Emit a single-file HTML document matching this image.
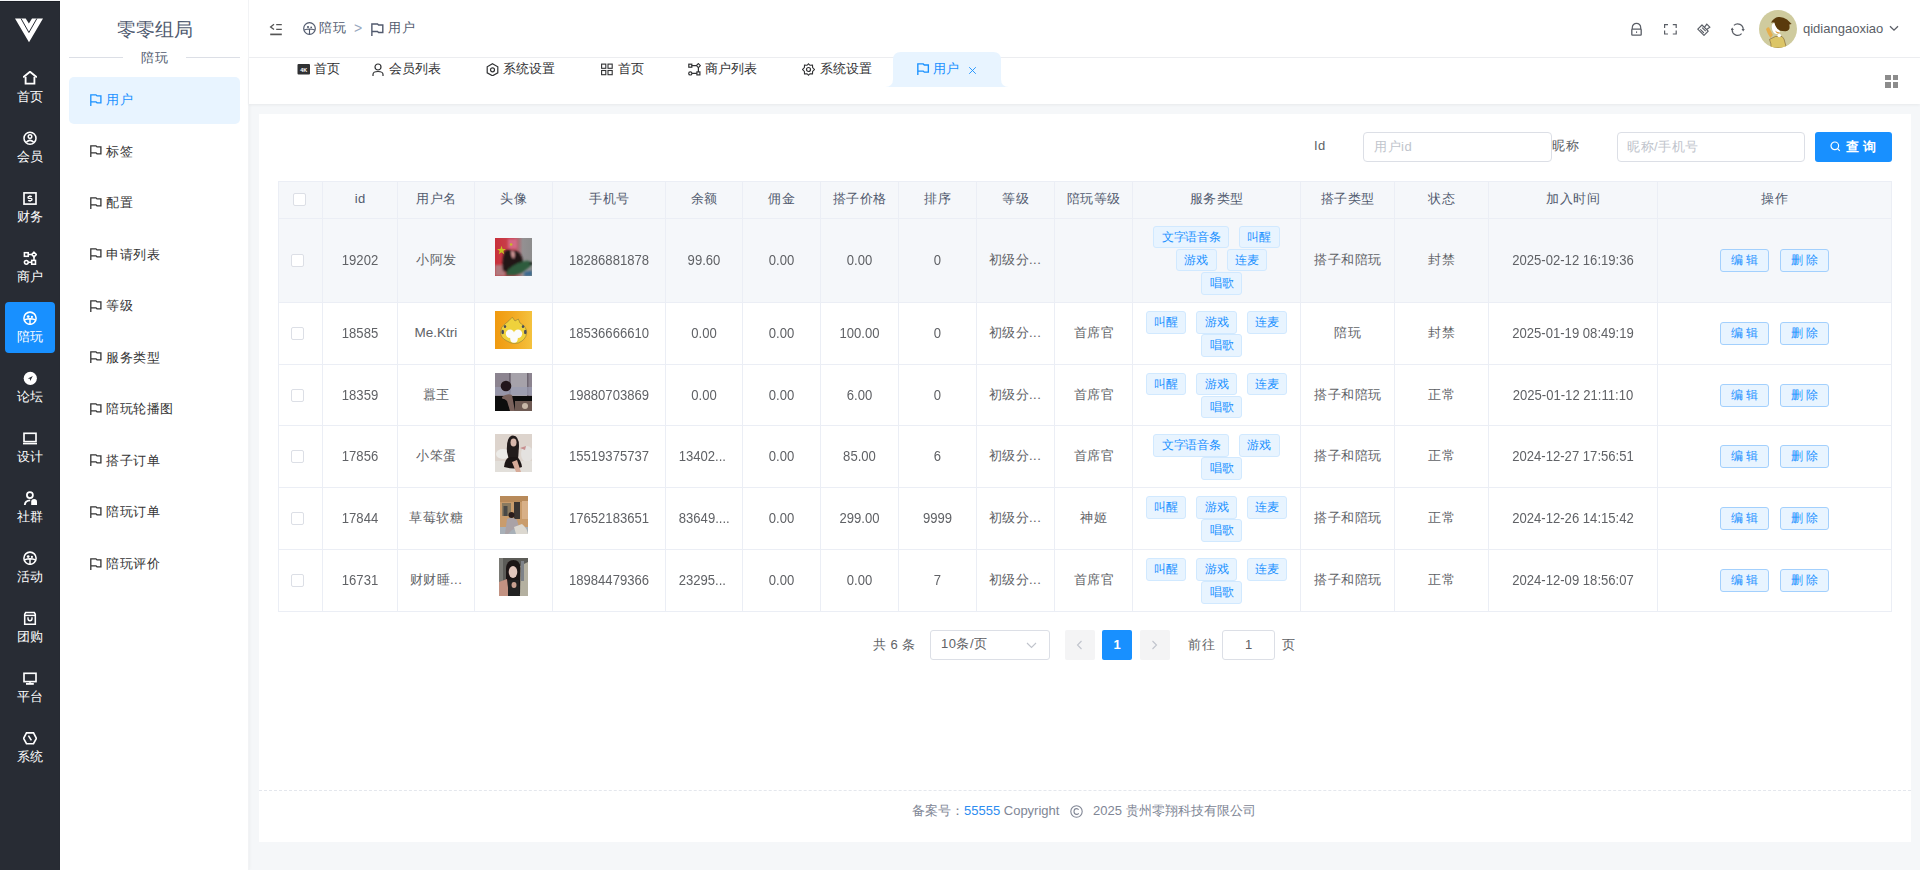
<!DOCTYPE html>
<html><head><meta charset="utf-8"><title>用户</title>
<style>
*{box-sizing:border-box;margin:0;padding:0}
html,body{width:1920px;height:870px;overflow:hidden}
body{position:relative;background:#f5f7f9;font-family:"Liberation Sans", sans-serif;color:#606266;font-size:13px}
.a{position:absolute}
.nw{white-space:nowrap}
#dark{left:0;top:1px;width:60px;height:869px;background:#282c34;border-top:1px solid #1d2027}
.di{position:absolute;left:23px;width:14px;height:14px}
.dt{position:absolute;left:0;width:60px;text-align:center;color:#fff;font-size:13px;letter-spacing:.5px;line-height:16px}
#act{left:5px;top:302px;width:50px;height:51px;background:#1890ff;border-radius:4px}
#sub{left:60px;top:0;width:189px;height:870px;background:#fff;border-right:1px solid #f2f3f5;box-shadow:1px 0 3px rgba(0,0,0,.03)}
.mi{position:absolute;left:9px;width:171px;height:47px;border-radius:4px}
.mt{position:absolute;left:46px;color:#303133;font-size:13px;letter-spacing:.5px;line-height:16px}
.fl{position:absolute;left:30px;width:12px;height:12px}
#hdr{left:249px;top:0;width:1671px;height:58px;background:#fff;border-bottom:1px solid #eeeff2}
#tabs{left:249px;top:58px;width:1671px;height:46px;background:#fff;box-shadow:0 1px 3px rgba(0,0,0,.06)}
.tt{position:absolute;top:61px;color:#303133;font-size:13px;line-height:16px}
#card{left:259px;top:114px;width:1652px;height:728px;background:#fff}

.vl{position:absolute;top:181px;width:1px;height:431px;background:#ebeef5}
.hl{position:absolute;left:278px;width:1614px;height:1px;background:#ebeef5}
.c{position:absolute;text-align:center;white-space:nowrap;color:#606266;font-size:13px;letter-spacing:.5px;text-indent:.5px}
.num{font-size:14px;letter-spacing:0;text-indent:0;transform:scaleX(.935)}
.tag{display:inline-block;height:22.5px;line-height:20.5px;text-align:center;padding:0;width:40.6px;font-size:12px;color:#1890ff;background:#e8f4ff;border:1px solid #d1e9ff;border-radius:3px;white-space:nowrap}
.tags{position:absolute;display:flex;flex-wrap:wrap;justify-content:center;row-gap:.75px}
.tag.w5{width:75.6px;letter-spacing:-.3px}
.tags .tag+.tag{margin-left:10px}
.btn{position:absolute;width:48.5px;height:23px;line-height:21px;text-align:center;font-size:12px;color:#1890ff;background:#e8f4ff;border:1px solid #a3d0fd;border-radius:3px}
</style></head><body>

<div id="dark" class="a"></div>
<svg class="a" style="left:0;top:0" width="60" height="60" viewBox="0 0 60 60"><polygon fill="#fff" points="15,18.5 25.7,18.5 28.9,23.5 32,18.5 43,18.5 29,42.3"/><polyline fill="none" stroke="#282c34" stroke-width="1" points="21,18.5 28.9,32.5 36.9,18.5"/></svg>
<div id="act" class="a"></div>
<svg class="di" style="top:71px" viewBox="0 0 14 14"><path d="M0.2 6.4 L7 0.7 L13.8 6.4" fill="none" stroke="#fff" stroke-width="1.85"/><path d="M2.6 5.8 V12.6 H11.4 V5.8" fill="none" stroke="#fff" stroke-width="1.85"/></svg>
<div class="dt" style="top:89px">首页</div>
<svg class="di" style="top:131px" viewBox="0 0 14 14"><circle cx="7" cy="7.2" r="6" fill="none" stroke="#fff" stroke-width="1.55"/><circle cx="7" cy="5.6" r="1.8" fill="none" stroke="#fff" stroke-width="1.45"/><path d="M3.3 11.3 Q7 7.4 10.7 11.3" fill="none" stroke="#fff" stroke-width="1.55"/></svg>
<div class="dt" style="top:149px">会员</div>
<svg class="di" style="top:191px" viewBox="0 0 14 14"><rect x="1" y="1.9" width="12" height="11.2" fill="none" stroke="#fff" stroke-width="1.65"/><path d="M8.9 5.4 H6.1 Q5 5.4 5 6.4 Q5 7.4 6.1 7.4 H7.9 Q9 7.4 9 8.5 Q9 9.6 7.9 9.6 H5.1 M7 4.2 V5.4 M7 9.6 V10.8" fill="none" stroke="#fff" stroke-width="1.35"/></svg>
<div class="dt" style="top:209px">财务</div>
<svg class="di" style="top:251px" viewBox="0 0 14 14"><rect x="1.4" y="1.7" width="3.8" height="3.6" fill="none" stroke="#fff" stroke-width="1.55"/><path d="M11 1.2 L13.3 3.5 L11 5.8 L8.7 3.5 Z" fill="none" stroke="#fff" stroke-width="1.55"/><circle cx="3.3" cy="11.3" r="1.9" fill="none" stroke="#fff" stroke-width="1.55"/><rect x="8.7" y="9.4" width="3.8" height="3.8" fill="none" stroke="#fff" stroke-width="1.55"/><path d="M5.2 3.5 H8.7 M11 5.8 V9.4 M5.2 11.3 H8.7" stroke="#fff" stroke-width="1.55"/></svg>
<div class="dt" style="top:269px">商户</div>
<svg class="di" style="top:311px" viewBox="0 0 14 14"><circle cx="7" cy="7.2" r="6.1" fill="none" stroke="#fff" stroke-width="1.55"/><circle cx="5.2" cy="5.6" r="1.4" fill="#fff"/><circle cx="8.9" cy="5.9" r="1.1" fill="#fff"/><path d="M1.4 8.9 Q7 6.7 12.6 8.9 M7 8.4 V13" fill="none" stroke="#fff" stroke-width="1.45"/></svg>
<div class="dt" style="top:329px">陪玩</div>
<svg class="di" style="top:371px" viewBox="0 0 14 14"><circle cx="7.3" cy="7.3" r="6.6" fill="#fff"/><path d="M9.8 5 L4.8 7.5 L6.8 7.8 L7.2 9.9 Z" fill="#282c34"/></svg>
<div class="dt" style="top:389px">论坛</div>
<svg class="di" style="top:431px" viewBox="0 0 14 14"><rect x="1" y="2.3" width="12" height="8.3" fill="none" stroke="#fff" stroke-width="1.65"/><rect x="0" y="11.9" width="14" height="1.5" fill="#fff"/></svg>
<div class="dt" style="top:449px">设计</div>
<svg class="di" style="top:491px" viewBox="0 0 14 14"><circle cx="6.9" cy="4.1" r="3" fill="none" stroke="#fff" stroke-width="1.75"/><path d="M1.8 14 Q2 9.6 7.2 9.4" fill="none" stroke="#fff" stroke-width="1.85"/><path d="M8.2 14 V10.6 Q8.2 8.1 11.1 8.1 Q14 8.1 14 10.6 V14 Z" fill="#fff"/></svg>
<div class="dt" style="top:509px">社群</div>
<svg class="di" style="top:551px" viewBox="0 0 14 14"><circle cx="7" cy="7.2" r="6.1" fill="none" stroke="#fff" stroke-width="1.55"/><circle cx="5.2" cy="5.6" r="1.4" fill="#fff"/><circle cx="8.9" cy="5.9" r="1.1" fill="#fff"/><path d="M1.4 8.9 Q7 6.7 12.6 8.9 M7 8.4 V13" fill="none" stroke="#fff" stroke-width="1.45"/></svg>
<div class="dt" style="top:569px">活动</div>
<svg class="di" style="top:611px" viewBox="0 0 14 14"><path d="M2.7 1.5 H11.3 L12.3 3.3 V13.3 H1.7 V3.3 Z" fill="none" stroke="#fff" stroke-width="1.55"/><path d="M2 4.4 H12" stroke="#fff" stroke-width="1.45"/><path d="M5 6.3 V7.6 Q5 9.8 7 9.8 Q9 9.8 9 7.6 V6.3" fill="none" stroke="#fff" stroke-width="1.45"/></svg>
<div class="dt" style="top:629px">团购</div>
<svg class="di" style="top:671px" viewBox="0 0 14 14"><rect x="1" y="2.3" width="12" height="8.3" fill="none" stroke="#fff" stroke-width="1.65"/><rect x="3" y="12" width="7.8" height="1.8" fill="#fff"/><rect x="6.3" y="10.6" width="1.4" height="1.6" fill="#fff"/></svg>
<div class="dt" style="top:689px">平台</div>
<svg class="di" style="top:731px" viewBox="0 0 14 14"><path d="M0.6 7.3 L3.5 1.8 H10.5 L13.4 7.3 L10.5 12.7 H3.5 Z" fill="none" stroke="#fff" stroke-width="1.65"/><path d="M5.4 4.6 L8.4 9.4" stroke="#fff" stroke-width="1.55"/></svg>
<div class="dt" style="top:749px">系统</div>
<div id="sub" class="a"></div>
<div class="a nw" style="left:60px;top:18px;width:189px;text-align:center;font-size:19px;line-height:24px;color:#4f5a70">零零组局</div>
<div class="a" style="left:69px;top:57px;width:54px;height:1px;background:#dcdfe6"></div>
<div class="a" style="left:186px;top:57px;width:54px;height:1px;background:#dcdfe6"></div>
<div class="a nw" style="left:60px;top:50px;width:189px;text-align:center;font-size:13px;letter-spacing:.5px;line-height:16px;color:#515a6e">陪玩</div>
<div class="a" style="left:69px;top:77px;width:171px;height:47px;border-radius:5px;background:#e8f4ff"></div>
<svg class="a" style="left:90px;top:93.60px" width="12" height="12" viewBox="0 0 12 12"><path d="M0.8 12 V0.9 H6 L7 1.9 H10.9 V8.8 H7 L6 7.8 H0.8" fill="none" stroke="#1890ff" stroke-width="1.3"/></svg>
<div class="a nw" style="left:106px;top:92.00px;font-size:13px;letter-spacing:.5px;line-height:16px;color:#1890ff">用户</div>
<svg class="a" style="left:90px;top:145.15px" width="12" height="12" viewBox="0 0 12 12"><path d="M0.8 12 V0.9 H6 L7 1.9 H10.9 V8.8 H7 L6 7.8 H0.8" fill="none" stroke="#333" stroke-width="1.3"/></svg>
<div class="a nw" style="left:106px;top:143.55px;font-size:13px;letter-spacing:.5px;line-height:16px;color:#333">标签</div>
<svg class="a" style="left:90px;top:196.70px" width="12" height="12" viewBox="0 0 12 12"><path d="M0.8 12 V0.9 H6 L7 1.9 H10.9 V8.8 H7 L6 7.8 H0.8" fill="none" stroke="#333" stroke-width="1.3"/></svg>
<div class="a nw" style="left:106px;top:195.10px;font-size:13px;letter-spacing:.5px;line-height:16px;color:#333">配置</div>
<svg class="a" style="left:90px;top:248.25px" width="12" height="12" viewBox="0 0 12 12"><path d="M0.8 12 V0.9 H6 L7 1.9 H10.9 V8.8 H7 L6 7.8 H0.8" fill="none" stroke="#333" stroke-width="1.3"/></svg>
<div class="a nw" style="left:106px;top:246.65px;font-size:13px;letter-spacing:.5px;line-height:16px;color:#333">申请列表</div>
<svg class="a" style="left:90px;top:299.80px" width="12" height="12" viewBox="0 0 12 12"><path d="M0.8 12 V0.9 H6 L7 1.9 H10.9 V8.8 H7 L6 7.8 H0.8" fill="none" stroke="#333" stroke-width="1.3"/></svg>
<div class="a nw" style="left:106px;top:298.20px;font-size:13px;letter-spacing:.5px;line-height:16px;color:#333">等级</div>
<svg class="a" style="left:90px;top:351.35px" width="12" height="12" viewBox="0 0 12 12"><path d="M0.8 12 V0.9 H6 L7 1.9 H10.9 V8.8 H7 L6 7.8 H0.8" fill="none" stroke="#333" stroke-width="1.3"/></svg>
<div class="a nw" style="left:106px;top:349.75px;font-size:13px;letter-spacing:.5px;line-height:16px;color:#333">服务类型</div>
<svg class="a" style="left:90px;top:402.90px" width="12" height="12" viewBox="0 0 12 12"><path d="M0.8 12 V0.9 H6 L7 1.9 H10.9 V8.8 H7 L6 7.8 H0.8" fill="none" stroke="#333" stroke-width="1.3"/></svg>
<div class="a nw" style="left:106px;top:401.30px;font-size:13px;letter-spacing:.5px;line-height:16px;color:#333">陪玩轮播图</div>
<svg class="a" style="left:90px;top:454.45px" width="12" height="12" viewBox="0 0 12 12"><path d="M0.8 12 V0.9 H6 L7 1.9 H10.9 V8.8 H7 L6 7.8 H0.8" fill="none" stroke="#333" stroke-width="1.3"/></svg>
<div class="a nw" style="left:106px;top:452.85px;font-size:13px;letter-spacing:.5px;line-height:16px;color:#333">搭子订单</div>
<svg class="a" style="left:90px;top:506.00px" width="12" height="12" viewBox="0 0 12 12"><path d="M0.8 12 V0.9 H6 L7 1.9 H10.9 V8.8 H7 L6 7.8 H0.8" fill="none" stroke="#333" stroke-width="1.3"/></svg>
<div class="a nw" style="left:106px;top:504.40px;font-size:13px;letter-spacing:.5px;line-height:16px;color:#333">陪玩订单</div>
<svg class="a" style="left:90px;top:557.55px" width="12" height="12" viewBox="0 0 12 12"><path d="M0.8 12 V0.9 H6 L7 1.9 H10.9 V8.8 H7 L6 7.8 H0.8" fill="none" stroke="#333" stroke-width="1.3"/></svg>
<div class="a nw" style="left:106px;top:555.95px;font-size:13px;letter-spacing:.5px;line-height:16px;color:#333">陪玩评价</div>
<div id="hdr" class="a"></div>
<svg class="a" style="left:269px;top:23px" width="14" height="13" viewBox="0 0 14 13"><path d="M5 1.2 L1.6 3.9 L5 6.6" fill="none" stroke="#555" stroke-width="1.3"/><path d="M7.2 1.6 H12.8 M7.2 6.4 H12.8" stroke="#555" stroke-width="1.3"/><path d="M1.2 11.4 H12.8" stroke="#555" stroke-width="1.7"/></svg>
<svg class="a" style="left:303px;top:22px" width="13" height="13" viewBox="0 0 13 13"><circle cx="6.5" cy="6.5" r="5.8" fill="none" stroke="#515a6e" stroke-width="1.2"/><circle cx="5" cy="5" r="1.1" fill="#515a6e"/><circle cx="8.2" cy="5.3" r="0.9" fill="#515a6e"/><path d="M1.2 8 Q6.5 6 11.8 8 M6.5 7.6 V12" fill="none" stroke="#515a6e" stroke-width="1.1"/></svg>
<div class="a nw" style="left:319px;top:20px;font-size:13px;letter-spacing:.5px;line-height:16px;color:#515a6e">陪玩</div>
<div class="a nw" style="left:354px;top:19.5px;font-size:14px;line-height:17px;color:#97a8be">&gt;</div>
<svg class="a" style="left:371px;top:22.5px" width="13" height="13" viewBox="0 0 12 12"><path d="M0.8 12 V0.9 H6 L7 1.9 H10.9 V8.8 H7 L6 7.8 H0.8" fill="none" stroke="#515a6e" stroke-width="1.3"/></svg>
<div class="a nw" style="left:388px;top:20px;font-size:13px;letter-spacing:.5px;line-height:16px;color:#515a6e">用户</div>
<svg class="a" style="left:1630px;top:22px" width="13" height="14" viewBox="0 0 13 14"><path d="M2.3 7 V5.5 A4.2 4.2 0 0 1 10.7 5.5 V7" fill="none" stroke="#5a5e66" stroke-width="1.2"/><rect x="1.8" y="7.2" width="9.4" height="6" rx=".6" fill="none" stroke="#5a5e66" stroke-width="1.3"/><rect x="6" y="9.4" width="1.1" height="1.5" fill="#5a5e66"/></svg>
<svg class="a" style="left:1663px;top:23px" width="15" height="13" viewBox="0 0 15 13"><path d="M1.6 5 V1.6 H5 M9.8 1.6 H13.2 V5 M13.2 7.6 V11 H9.8 M5 11 H1.6 V7.6" fill="none" stroke="#5a5e66" stroke-width="1.2"/></svg>
<svg class="a" style="left:1697px;top:23px" width="14" height="14" viewBox="0 0 14 14"><path d="M0.8 6.2 L5 2 L11.2 8.2 L7 12.4 Z" fill="none" stroke="#5a5e66" stroke-width="1.2" stroke-linejoin="round"/><path d="M7.4 4.4 L9.8 1.2 L12.8 4.2 L9.6 6.6" fill="none" stroke="#5a5e66" stroke-width="1.2"/><path d="M3.3 6.4 L6.9 10 M5.1 4.6 L8.7 8.2" stroke="#5a5e66" stroke-width="1.1"/></svg>
<svg class="a" style="left:1731px;top:23px" width="14" height="14" viewBox="0 0 14 14"><path d="M2.9 2.4 A5.5 5.5 0 0 1 12.2 6.6 M10.6 10.7 A5.5 5.5 0 0 1 1.2 6.4" fill="none" stroke="#5a5e66" stroke-width="1.2"/><path d="M10.5 6 H13.8 L12.15 8.6 Z M-0.4 7 H2.9 L1.25 4.4 Z" fill="#5a5e66"/></svg>
<svg class="a" style="left:1759px;top:10px" width="38" height="38" viewBox="0 0 38 38"><defs><clipPath id="av"><circle cx="19" cy="19" r="19"/></clipPath></defs><g clip-path="url(#av)"><rect width="38" height="38" fill="#cfcb9e"/><path d="M10.5 29.4 L16.3 26.5 H23 L25 29 L27.5 38 H12 Q12.5 34 10.5 29.4 Z" fill="#dcc566" stroke="#6a4a20" stroke-width=".5"/><path d="M7 19.3 Q8 17 10 17.3 L13.9 25 L11.5 28 Q8.5 24 7 19.3 Z" fill="#e6ae4c"/><path d="M13 14.5 Q12 19.5 14.9 23.1 Q17.5 24.5 19.5 23.6 L21.5 21 Q17.5 18.5 15.5 12.5 Z" fill="#fff"/><path d="M16.3 20.4 Q18 22.6 20.5 22 L19.6 23.4 Q17 23.6 16.3 20.4 Z" fill="#e09a40"/><path d="M12 12.5 Q15 7.5 19.2 7 Q24 6.4 28 9.5 L32.7 14 L30.3 14.4 Q31 18 30 19.5 Q28.5 21.5 26 21.2 L21.2 20.7 Q18 19 17.3 17.3 Q15.8 15 15.4 12.5 Z" fill="#5a3a0c"/><circle cx="20.2" cy="25.5" r="1.8" fill="#fff"/></g></svg>
<div class="a nw" style="left:1803px;top:20px;font-size:13px;line-height:17px;color:#5a5e66">qidiangaoxiao</div>
<svg class="a" style="left:1889px;top:25px" width="10" height="7" viewBox="0 0 10 7"><path d="M1 1.2 L5 5.2 L9 1.2" fill="none" stroke="#5a5e66" stroke-width="1.3"/></svg>
<div id="tabs" class="a"></div>
<svg class="a" style="left:885px;top:52px" width="124" height="36" viewBox="0 0 124 36"><path d="M0 35 Q8 35 8 27 V8 Q8 0 16 0 H108 Q116 0 116 8 V27 Q116 35 124 35 Z" fill="#e8f4ff"/></svg>
<svg class="a" style="left:297px;top:63px" width="13" height="13" viewBox="0 0 13 13"><rect x="0.5" y="1" width="12.5" height="10.5" rx="1" fill="#303133"/><text x="6.7" y="8.6" font-size="5.5" font-family="Liberation Sans" font-weight="bold" text-anchor="middle" fill="#fff">4K</text></svg>
<div class="tt nw" style="left:314px">首页</div>
<svg class="a" style="left:372px;top:63px" width="13" height="13" viewBox="0 0 13 13"><circle cx="6" cy="4" r="3" fill="none" stroke="#303133" stroke-width="1.2"/><path d="M1 13 V11.5 Q1 8.5 6 8.5 Q11 8.5 11 11.5 V13" fill="none" stroke="#303133" stroke-width="1.2"/></svg>
<div class="tt nw" style="left:389px">会员列表</div>
<svg class="a" style="left:486px;top:63px" width="13" height="13" viewBox="0 0 13 13"><path d="M6.5 0.8 L11.8 3.8 V9.8 L6.5 12.8 L1.2 9.8 V3.8 Z" fill="none" stroke="#303133" stroke-width="1.2"/><circle cx="6.5" cy="6.8" r="2" fill="none" stroke="#303133" stroke-width="1.2"/></svg>
<div class="tt nw" style="left:503px">系统设置</div>
<svg class="a" style="left:601px;top:63px" width="13" height="13" viewBox="0 0 13 13"><rect x="0.6" y="1.1" width="4.2" height="4.2" fill="none" stroke="#303133" stroke-width="1.1"/><rect x="7" y="1.1" width="4.2" height="4.2" fill="none" stroke="#303133" stroke-width="1.1"/><rect x="0.6" y="7.5" width="4.2" height="4.2" fill="none" stroke="#303133" stroke-width="1.1"/><rect x="7" y="7.5" width="4.2" height="4.2" fill="none" stroke="#303133" stroke-width="1.1"/></svg>
<div class="tt nw" style="left:617.5px">首页</div>
<svg class="a" style="left:688px;top:63px" width="13" height="13" viewBox="0 0 13 13"><rect x="0.8" y="1.2" width="3" height="3" fill="none" stroke="#303133" stroke-width="1.2"/><path d="M10.4 0.5 L12.3 2.6 L10.4 4.6 L8.4 2.6 Z" fill="none" stroke="#303133" stroke-width="1.1"/><circle cx="2.3" cy="10.4" r="1.6" fill="none" stroke="#303133" stroke-width="1.2"/><rect x="8.9" y="8.9" width="3" height="3" fill="none" stroke="#303133" stroke-width="1.2"/><path d="M3.8 2.6 H8.4 M10.4 4.6 V8.9 M3.9 10.4 H8.9" stroke="#303133" stroke-width="1.2"/></svg>
<div class="tt nw" style="left:705px">商户列表</div>
<svg class="a" style="left:802px;top:63px" width="13" height="13" viewBox="0 0 13 13"><path d="M6.5 0.8 L8 2.3 L10.5 2.1 L10.6 4.5 L12.4 6.5 L10.6 8.5 L10.5 10.9 L8 10.7 L6.5 12.2 L5 10.7 L2.5 10.9 L2.4 8.5 L0.6 6.5 L2.4 4.5 L2.5 2.1 L5 2.3 Z" fill="none" stroke="#303133" stroke-width="1.1"/><circle cx="6.5" cy="6.5" r="2" fill="none" stroke="#303133" stroke-width="1.2"/></svg>
<div class="tt nw" style="left:820px">系统设置</div>
<svg class="a" style="left:917px;top:62.5px" width="12.5" height="12.5" viewBox="0 0 12 12"><path d="M0.8 12 V0.9 H6 L7 1.9 H10.9 V8.8 H7 L6 7.8 H0.8" fill="none" stroke="#1890ff" stroke-width="1.3"/></svg>
<div class="tt nw" style="left:933px;color:#1890ff">用户</div>
<svg class="a" style="left:968px;top:65.5px" width="9" height="9" viewBox="0 0 9 9"><path d="M1.2 1.2 L7.8 7.8 M7.8 1.2 L1.2 7.8" stroke="#1890ff" stroke-width=".9"/></svg>
<svg class="a" style="left:1885px;top:75px" width="13" height="13" viewBox="0 0 13 13"><rect x="0" y="0" width="6" height="5" fill="#8c8c8c"/><rect x="8" y="0" width="5" height="5" fill="#8c8c8c"/><rect x="0" y="7" width="6" height="6" fill="#8c8c8c"/><rect x="8" y="7" width="5" height="6" fill="#8c8c8c"/></svg>
<div id="card" class="a"></div>
<div class="a nw" style="left:1314px;top:138px;font-size:13px;letter-spacing:.5px;line-height:16px;color:#606266">Id</div>
<div class="a" style="left:1363px;top:132px;width:189px;height:30px;border:1px solid #dcdfe6;border-radius:4px;background:#fff"></div>
<div class="a nw" style="left:1374px;top:139px;font-size:13px;letter-spacing:.5px;line-height:16px;color:#c0c4cc">用户id</div>
<div class="a nw" style="left:1552px;top:138px;font-size:13px;letter-spacing:.5px;line-height:16px;color:#606266">昵称</div>
<div class="a" style="left:1617px;top:132px;width:188px;height:30px;border:1px solid #dcdfe6;border-radius:4px;background:#fff"></div>
<div class="a nw" style="left:1627px;top:139px;font-size:13px;letter-spacing:.5px;line-height:16px;color:#c0c4cc">昵称/手机号</div>
<div class="a" style="left:1815px;top:132px;width:77px;height:30px;border-radius:3px;background:#1890ff"></div>
<svg class="a" style="left:1830px;top:141px" width="11" height="11" viewBox="0 0 11 11"><circle cx="4.8" cy="4.8" r="3.8" fill="none" stroke="#fff" stroke-width="1.2"/><path d="M7.6 7.6 L9.8 9.8" stroke="#fff" stroke-width="1.2"/></svg>
<div class="a nw" style="left:1846px;top:139px;font-size:13px;line-height:16px;color:#fff;letter-spacing:4px;font-weight:bold">查询</div>
<div class="a" style="left:278px;top:181px;width:1614px;height:38px;background:#f5f7fa"></div>
<div class="a" style="left:278px;top:218px;width:1614px;height:85px;background:#f5f7fa"></div>
<div class="hl" style="top:181px"></div>
<div class="hl" style="top:218px"></div>
<div class="hl" style="top:302px"></div>
<div class="hl" style="top:364px"></div>
<div class="hl" style="top:425px"></div>
<div class="hl" style="top:487px"></div>
<div class="hl" style="top:549px"></div>
<div class="hl" style="top:611px"></div>
<div class="vl" style="left:278px"></div>
<div class="vl" style="left:322px"></div>
<div class="vl" style="left:397px"></div>
<div class="vl" style="left:474px"></div>
<div class="vl" style="left:552px"></div>
<div class="vl" style="left:665px"></div>
<div class="vl" style="left:742px"></div>
<div class="vl" style="left:820px"></div>
<div class="vl" style="left:898px"></div>
<div class="vl" style="left:976px"></div>
<div class="vl" style="left:1054px"></div>
<div class="vl" style="left:1132px"></div>
<div class="vl" style="left:1300px"></div>
<div class="vl" style="left:1394px"></div>
<div class="vl" style="left:1488px"></div>
<div class="vl" style="left:1657px"></div>
<div class="vl" style="left:1891px"></div>
<div class="c" style="left:323px;top:191px;width:74px;line-height:16px;color:#515a6e">id</div>
<div class="c" style="left:398px;top:191px;width:76px;line-height:16px;color:#515a6e">用户名</div>
<div class="c" style="left:475px;top:191px;width:77px;line-height:16px;color:#515a6e">头像</div>
<div class="c" style="left:553px;top:191px;width:112px;line-height:16px;color:#515a6e">手机号</div>
<div class="c" style="left:666px;top:191px;width:76px;line-height:16px;color:#515a6e">余额</div>
<div class="c" style="left:743px;top:191px;width:77px;line-height:16px;color:#515a6e">佣金</div>
<div class="c" style="left:821px;top:191px;width:77px;line-height:16px;color:#515a6e">搭子价格</div>
<div class="c" style="left:899px;top:191px;width:77px;line-height:16px;color:#515a6e">排序</div>
<div class="c" style="left:977px;top:191px;width:77px;line-height:16px;color:#515a6e">等级</div>
<div class="c" style="left:1055px;top:191px;width:77px;line-height:16px;color:#515a6e">陪玩等级</div>
<div class="c" style="left:1133px;top:191px;width:167px;line-height:16px;color:#515a6e">服务类型</div>
<div class="c" style="left:1301px;top:191px;width:93px;line-height:16px;color:#515a6e">搭子类型</div>
<div class="c" style="left:1395px;top:191px;width:93px;line-height:16px;color:#515a6e">状态</div>
<div class="c" style="left:1489px;top:191px;width:168px;line-height:16px;color:#515a6e">加入时间</div>
<div class="c" style="left:1658px;top:191px;width:233px;line-height:16px;color:#515a6e">操作</div>
<div class="a" style="left:293px;top:193px;width:13px;height:13px;border:1px solid #dcdfe6;border-radius:2px;background:#fff"></div>
<div class="a" style="left:291px;top:254.0px;width:13px;height:13px;border:1px solid #dcdfe6;border-radius:2px;background:#fff"></div>
<div class="c num" style="left:323px;top:252.0px;width:74px;line-height:16px">19202</div>
<div class="c" style="left:398px;top:252.0px;width:76px;line-height:16px">小阿发</div>
<div class="c num" style="left:553px;top:252.0px;width:112px;line-height:16px">18286881878</div>
<div class="c num" style="left:666px;top:252.0px;width:76px;line-height:16px">99.60</div>
<div class="c num" style="left:743px;top:252.0px;width:77px;line-height:16px">0.00</div>
<div class="c num" style="left:821px;top:252.0px;width:77px;line-height:16px">0.00</div>
<div class="c num" style="left:899px;top:252.0px;width:77px;line-height:16px">0</div>
<div class="c" style="left:988px;top:252.0px;text-align:left;line-height:16px">初级分...</div>
<div class="c" style="left:1301px;top:252.0px;width:93px;line-height:16px">搭子和陪玩</div>
<div class="c" style="left:1395px;top:252.0px;width:93px;line-height:16px">封禁</div>
<div class="c num" style="left:1489px;top:252.0px;width:168px;line-height:16px">2025-02-12 16:19:36</div>
<svg class="a" style="left:495.0px;top:238.0px" width="37" height="38" viewBox="0 0 37 38"><defs><linearGradient id="g1" x1="0" x2="1" y1="0" y2="0"><stop offset="0" stop-color="#c8303a"/><stop offset=".5" stop-color="#c84452"/><stop offset=".75" stop-color="#949092"/><stop offset="1" stop-color="#8c8c8c"/></linearGradient><filter id="b1" x="-20%" y="-20%" width="140%" height="140%"><feGaussianBlur stdDeviation=".9"/></filter></defs><rect width="37" height="38" fill="url(#g1)"/><g filter="url(#b1)"><rect x="0" y="27" width="10" height="11" fill="#b07a7e"/><path d="M13 1 H22 L22 10 Q18 12 13 10 Z" fill="#d87090" opacity=".8"/><path d="M9.6 13 Q13 11 17 12 Q24 12 27 19 L28.5 26 L20 31 L14 35 L8 33 Q6 24 9.6 13 Z" fill="#241416"/><path d="M16.2 12.5 Q19.8 13 19.7 17 L19 20.7 Q17 20 16.4 17 Z" fill="#dca0a0"/><path d="M10 37.6 L13 31.8 Q18 27 23.1 25 L31.8 22.6 L36.2 24 L35.7 28 Q31 32 27 34.7 L19.7 37.6 Z" fill="#2e5c3e"/><path d="M29.4 34 L37 32.5 V38 H29 Z" fill="#3a6a90"/><circle cx="36" cy="25.5" r="1.6" fill="#111"/></g><polygon points="6.5,7.8 7.6,11 11,11 8.3,13 9.3,16.3 6.5,14.3 3.7,16.3 4.7,13 2,11 5.4,11" fill="#c6c020"/><circle cx="16.1" cy="6.5" r="1.3" fill="#c6c020"/></svg>
<div class="tags" style="left:1145px;top:225.5px;width:143px"><span class="tag w5">文字语音条</span><span class="tag">叫醒</span><span class="tag">游戏</span><span class="tag">连麦</span><span class="tag">唱歌</span></div>
<div class="btn" style="left:1720px;top:249.0px">编 辑</div>
<div class="btn" style="left:1780px;top:249.0px">删 除</div>
<div class="a" style="left:291px;top:327.0px;width:13px;height:13px;border:1px solid #dcdfe6;border-radius:2px;background:#fff"></div>
<div class="c num" style="left:323px;top:325.0px;width:74px;line-height:16px">18585</div>
<div class="c" style="left:398px;top:325.0px;width:76px;line-height:16px;font-size:13.5px;letter-spacing:0;text-indent:0">Me.Ktri</div>
<div class="c num" style="left:553px;top:325.0px;width:112px;line-height:16px">18536666610</div>
<div class="c num" style="left:666px;top:325.0px;width:76px;line-height:16px">0.00</div>
<div class="c num" style="left:743px;top:325.0px;width:77px;line-height:16px">0.00</div>
<div class="c num" style="left:821px;top:325.0px;width:77px;line-height:16px">100.00</div>
<div class="c num" style="left:899px;top:325.0px;width:77px;line-height:16px">0</div>
<div class="c" style="left:988px;top:325.0px;text-align:left;line-height:16px">初级分...</div>
<div class="c" style="left:1055px;top:325.0px;width:77px;line-height:16px">首席官</div>
<div class="c" style="left:1301px;top:325.0px;width:93px;line-height:16px">陪玩</div>
<div class="c" style="left:1395px;top:325.0px;width:93px;line-height:16px">封禁</div>
<div class="c num" style="left:1489px;top:325.0px;width:168px;line-height:16px">2025-01-19 08:49:19</div>
<svg class="a" style="left:495.0px;top:311.0px" width="37" height="38" viewBox="0 0 37 38"><defs><linearGradient id="g2" x1="0" x2="1"><stop offset="0" stop-color="#f09a10"/><stop offset=".45" stop-color="#f2a820"/><stop offset="1" stop-color="#f4c23e"/></linearGradient></defs><rect width="37" height="38" fill="url(#g2)"/><path d="M5.5 21 Q6 15 10 13 Q14 10 17.3 6.2 L20 10 L23.3 8 L25 12 Q30 14 31.5 19 Q32.5 26 27 30 Q20 35 12 30 Q5.5 27 5.5 21 Z" fill="#efd23c" stroke="#8c7c3c" stroke-width=".6"/><ellipse cx="7.7" cy="21" rx="1.3" ry="2.3" fill="#4a4c58"/><ellipse cx="30.3" cy="21" rx="1.3" ry="2.3" fill="#4a4c58"/><ellipse cx="10" cy="15.5" rx="1.2" ry="1.6" fill="#4a4c58"/><ellipse cx="28" cy="15.5" rx="1.2" ry="1.6" fill="#4a4c58"/><circle cx="15" cy="22.8" r="4.2" fill="#fbfbfb"/><circle cx="23" cy="22.8" r="4.2" fill="#fbfbfb"/><ellipse cx="19" cy="27.6" rx="3.8" ry="4.2" fill="#fbfbfb"/></svg>
<div class="tags" style="left:1145px;top:311.0px;width:143px"><span class="tag">叫醒</span><span class="tag">游戏</span><span class="tag">连麦</span><span class="tag">唱歌</span></div>
<div class="btn" style="left:1720px;top:322.0px">编 辑</div>
<div class="btn" style="left:1780px;top:322.0px">删 除</div>
<div class="a" style="left:291px;top:388.5px;width:13px;height:13px;border:1px solid #dcdfe6;border-radius:2px;background:#fff"></div>
<div class="c num" style="left:323px;top:386.5px;width:74px;line-height:16px">18359</div>
<div class="c" style="left:398px;top:386.5px;width:76px;line-height:16px">囂玊</div>
<div class="c num" style="left:553px;top:386.5px;width:112px;line-height:16px">19880703869</div>
<div class="c num" style="left:666px;top:386.5px;width:76px;line-height:16px">0.00</div>
<div class="c num" style="left:743px;top:386.5px;width:77px;line-height:16px">0.00</div>
<div class="c num" style="left:821px;top:386.5px;width:77px;line-height:16px">6.00</div>
<div class="c num" style="left:899px;top:386.5px;width:77px;line-height:16px">0</div>
<div class="c" style="left:988px;top:386.5px;text-align:left;line-height:16px">初级分...</div>
<div class="c" style="left:1055px;top:386.5px;width:77px;line-height:16px">首席官</div>
<div class="c" style="left:1301px;top:386.5px;width:93px;line-height:16px">搭子和陪玩</div>
<div class="c" style="left:1395px;top:386.5px;width:93px;line-height:16px">正常</div>
<div class="c num" style="left:1489px;top:386.5px;width:168px;line-height:16px">2025-01-12 21:11:10</div>
<svg class="a" style="left:495.0px;top:372.5px" width="37" height="38" viewBox="0 0 37 38"><defs><filter id="b3"><feGaussianBlur stdDeviation=".7"/></filter></defs><rect width="37" height="38" fill="#8c8490"/><g filter="url(#b3)"><rect x="16" y="0" width="17" height="24" fill="#a6a2aa"/><rect x="14" y="0" width="1.5" height="24" fill="#6e6672"/><rect x="32" y="0" width="1.5" height="24" fill="#6e6672"/><rect x="0" y="14" width="37" height="8" fill="#9a9cb2" opacity=".7"/><rect x="0" y="23" width="37" height="15" fill="#0e0a0e"/><path d="M7 24 Q12 20 17 22 L20 38 H9 Z" fill="#7a625c"/><path d="M3 38 L6 26 Q9 25 12 28 L15 38 Z" fill="#0a080a"/><circle cx="11" cy="13" r="5.3" fill="#24181a"/><rect x="20" y="28" width="17" height="10" fill="#6e5a52"/><circle cx="30" cy="33" r="3" fill="#c8b8a8"/></g></svg>
<div class="tags" style="left:1145px;top:372.5px;width:143px"><span class="tag">叫醒</span><span class="tag">游戏</span><span class="tag">连麦</span><span class="tag">唱歌</span></div>
<div class="btn" style="left:1720px;top:383.5px">编 辑</div>
<div class="btn" style="left:1780px;top:383.5px">删 除</div>
<div class="a" style="left:291px;top:450.0px;width:13px;height:13px;border:1px solid #dcdfe6;border-radius:2px;background:#fff"></div>
<div class="c num" style="left:323px;top:448.0px;width:74px;line-height:16px">17856</div>
<div class="c" style="left:398px;top:448.0px;width:76px;line-height:16px">小笨蛋</div>
<div class="c num" style="left:553px;top:448.0px;width:112px;line-height:16px">15519375737</div>
<div class="c num" style="left:677px;top:448.0px;text-align:left;line-height:16px">13402...</div>
<div class="c num" style="left:743px;top:448.0px;width:77px;line-height:16px">0.00</div>
<div class="c num" style="left:821px;top:448.0px;width:77px;line-height:16px">85.00</div>
<div class="c num" style="left:899px;top:448.0px;width:77px;line-height:16px">6</div>
<div class="c" style="left:988px;top:448.0px;text-align:left;line-height:16px">初级分...</div>
<div class="c" style="left:1055px;top:448.0px;width:77px;line-height:16px">首席官</div>
<div class="c" style="left:1301px;top:448.0px;width:93px;line-height:16px">搭子和陪玩</div>
<div class="c" style="left:1395px;top:448.0px;width:93px;line-height:16px">正常</div>
<div class="c num" style="left:1489px;top:448.0px;width:168px;line-height:16px">2024-12-27 17:56:51</div>
<svg class="a" style="left:495.0px;top:434.0px" width="37" height="38" viewBox="0 0 37 38"><defs><filter id="b4"><feGaussianBlur stdDeviation=".7"/></filter></defs><rect width="37" height="38" fill="#ddd4cd"/><g filter="url(#b4)"><ellipse cx="8" cy="20" rx="7" ry="5" fill="#ecebe8"/><ellipse cx="32" cy="20" rx="6" ry="8" fill="#e4e2e0"/><rect x="0" y="27" width="37" height="11" fill="#e2dfda"/><path d="M12 18 Q11 2 18 1.5 Q24 2 24 12 L23 26 L14 26 Z" fill="#241a1a"/><ellipse cx="18.5" cy="8.5" rx="3" ry="4" fill="#d8b8ac"/><path d="M9 33 Q10 24 15 23 L22 23 Q26 26 27 33 Q20 36 9 33 Z" fill="#1e1616"/><path d="M17 28 L21 38 H26 L22 26 Z" fill="#d6aa98"/><path d="M25 14 L31 12 L30 16 Z" fill="#c89090"/></g></svg>
<div class="tags" style="left:1145px;top:434.0px;width:143px"><span class="tag w5">文字语音条</span><span class="tag">游戏</span><span class="tag">唱歌</span></div>
<div class="btn" style="left:1720px;top:445.0px">编 辑</div>
<div class="btn" style="left:1780px;top:445.0px">删 除</div>
<div class="a" style="left:291px;top:512.0px;width:13px;height:13px;border:1px solid #dcdfe6;border-radius:2px;background:#fff"></div>
<div class="c num" style="left:323px;top:510.0px;width:74px;line-height:16px">17844</div>
<div class="c" style="left:398px;top:510.0px;width:76px;line-height:16px">草莓软糖</div>
<div class="c num" style="left:553px;top:510.0px;width:112px;line-height:16px">17652183651</div>
<div class="c num" style="left:677px;top:510.0px;text-align:left;line-height:16px">83649....</div>
<div class="c num" style="left:743px;top:510.0px;width:77px;line-height:16px">0.00</div>
<div class="c num" style="left:821px;top:510.0px;width:77px;line-height:16px">299.00</div>
<div class="c num" style="left:899px;top:510.0px;width:77px;line-height:16px">9999</div>
<div class="c" style="left:988px;top:510.0px;text-align:left;line-height:16px">初级分...</div>
<div class="c" style="left:1055px;top:510.0px;width:77px;line-height:16px">神姬</div>
<div class="c" style="left:1301px;top:510.0px;width:93px;line-height:16px">搭子和陪玩</div>
<div class="c" style="left:1395px;top:510.0px;width:93px;line-height:16px">正常</div>
<div class="c num" style="left:1489px;top:510.0px;width:168px;line-height:16px">2024-12-26 14:15:42</div>
<svg class="a" style="left:499.5px;top:496.0px" width="28" height="38" viewBox="0 0 28 38"><defs><filter id="b5"><feGaussianBlur stdDeviation=".7"/></filter></defs><rect width="28" height="38" fill="#c99c6c"/><g filter="url(#b5)"><rect x="0" y="0" width="28" height="6" fill="#b88a5a"/><rect x="2" y="7" width="9" height="13" fill="#8a7a60"/><rect x="3.5" y="10" width="4" height="10" fill="#4a4a46"/><rect x="14" y="6" width="6" height="17" fill="#3a3632"/><rect x="22" y="5" width="6" height="18" fill="#d8b088"/><rect x="0" y="31" width="28" height="7" fill="#a8b0b8"/><path d="M5 38 L7 23 Q12 20 17 24 L19 31 L12 34 L8 38 Z" fill="#aaa2a6"/><path d="M14 31 L22 28 Q27 32 28 38 H16 Z" fill="#dcd8d0"/><circle cx="11.5" cy="19" r="3" fill="#2a1e1c"/></g></svg>
<div class="tags" style="left:1145px;top:496.0px;width:143px"><span class="tag">叫醒</span><span class="tag">游戏</span><span class="tag">连麦</span><span class="tag">唱歌</span></div>
<div class="btn" style="left:1720px;top:507.0px">编 辑</div>
<div class="btn" style="left:1780px;top:507.0px">删 除</div>
<div class="a" style="left:291px;top:574.0px;width:13px;height:13px;border:1px solid #dcdfe6;border-radius:2px;background:#fff"></div>
<div class="c num" style="left:323px;top:572.0px;width:74px;line-height:16px">16731</div>
<div class="c" style="left:409px;top:572.0px;text-align:left;line-height:16px">财财睡...</div>
<div class="c num" style="left:553px;top:572.0px;width:112px;line-height:16px">18984479366</div>
<div class="c num" style="left:677px;top:572.0px;text-align:left;line-height:16px">23295...</div>
<div class="c num" style="left:743px;top:572.0px;width:77px;line-height:16px">0.00</div>
<div class="c num" style="left:821px;top:572.0px;width:77px;line-height:16px">0.00</div>
<div class="c num" style="left:899px;top:572.0px;width:77px;line-height:16px">7</div>
<div class="c" style="left:988px;top:572.0px;text-align:left;line-height:16px">初级分...</div>
<div class="c" style="left:1055px;top:572.0px;width:77px;line-height:16px">首席官</div>
<div class="c" style="left:1301px;top:572.0px;width:93px;line-height:16px">搭子和陪玩</div>
<div class="c" style="left:1395px;top:572.0px;width:93px;line-height:16px">正常</div>
<div class="c num" style="left:1489px;top:572.0px;width:168px;line-height:16px">2024-12-09 18:56:07</div>
<svg class="a" style="left:499.0px;top:558.0px" width="29" height="38" viewBox="0 0 29 38"><defs><filter id="b6"><feGaussianBlur stdDeviation=".7"/></filter></defs><rect width="29" height="38" fill="#5c5c58"/><g filter="url(#b6)"><rect x="0" y="0" width="4" height="38" fill="#7a7a74"/><path d="M21 8 L29 4 V38 H19 Z" fill="#b4b0a0"/><rect x="22" y="3" width="3" height="20" fill="#7e8288"/><path d="M7 36 L7 10 Q8 2 14.5 2 Q21 2 21.5 10 L21 36 Z" fill="#1e1616"/><ellipse cx="14" cy="14" rx="4.3" ry="6" fill="#e2c6bc"/><path d="M0 24 L8 21 L10 38 H0 Z" fill="#c29282"/><path d="M9 22 L20 22 L21 38 H9 Z" fill="#202020"/><ellipse cx="15" cy="27" rx="2.5" ry="3" fill="#c8a090"/></g></svg>
<div class="tags" style="left:1145px;top:558.0px;width:143px"><span class="tag">叫醒</span><span class="tag">游戏</span><span class="tag">连麦</span><span class="tag">唱歌</span></div>
<div class="btn" style="left:1720px;top:569.0px">编 辑</div>
<div class="btn" style="left:1780px;top:569.0px">删 除</div>
<div class="a nw" style="left:873px;top:637px;font-size:13px;letter-spacing:.5px;line-height:16px;color:#606266">共 6 条</div>
<div class="a" style="left:930px;top:630px;width:120px;height:30px;border:1px solid #dcdfe6;border-radius:3px;background:#fff"></div>
<div class="a nw" style="left:941px;top:636px;font-size:13px;letter-spacing:.5px;line-height:16px;color:#606266">10条/页</div>
<svg class="a" style="left:1026px;top:642px" width="11" height="7" viewBox="0 0 11 7"><path d="M1 1 L5.5 5.5 L10 1" fill="none" stroke="#c0c4cc" stroke-width="1.1"/></svg>
<div class="a" style="left:1065px;top:630px;width:30px;height:30px;border-radius:2px;background:#f4f4f5"></div>
<svg class="a" style="left:1076px;top:640px" width="7" height="10" viewBox="0 0 7 10"><path d="M5.5 1 L1.5 5 L5.5 9" fill="none" stroke="#c0c4cc" stroke-width="1.1"/></svg>
<div class="a" style="left:1102px;top:630px;width:30px;height:30px;border-radius:2px;background:#1890ff;color:#fff;text-align:center;line-height:30px;font-weight:bold;font-size:13px">1</div>
<div class="a" style="left:1140px;top:630px;width:30px;height:30px;border-radius:2px;background:#f4f4f5"></div>
<svg class="a" style="left:1151px;top:640px" width="7" height="10" viewBox="0 0 7 10"><path d="M1.5 1 L5.5 5 L1.5 9" fill="none" stroke="#c0c4cc" stroke-width="1.1"/></svg>
<div class="a nw" style="left:1188px;top:637px;font-size:13px;letter-spacing:.5px;line-height:16px;color:#606266">前往</div>
<div class="a" style="left:1222px;top:630px;width:53px;height:30px;border:1px solid #dcdfe6;border-radius:3px;background:#fff;text-align:center;line-height:28px;font-size:13px;color:#606266">1</div>
<div class="a nw" style="left:1282px;top:637px;font-size:13px;letter-spacing:.5px;line-height:16px;color:#606266">页</div>
<div class="a" style="left:259px;top:790px;width:1652px;height:0;border-top:1px dashed #e4e7ed"></div>
<div class="a nw" style="left:912px;top:803px;font-size:13px;line-height:16px;color:#808695">备案号：<span style="color:#2d8cf0">55555</span> Copyright</div>
<svg class="a" style="left:1070px;top:804.5px" width="13" height="13" viewBox="0 0 13 13"><circle cx="6.5" cy="6.5" r="5.7" fill="none" stroke="#808695" stroke-width="1.1"/><path d="M8.6 4.8 Q8 3.6 6.6 3.6 Q4 3.6 4 6.5 Q4 9.4 6.6 9.4 Q8 9.4 8.6 8.2" fill="none" stroke="#808695" stroke-width="1.1"/></svg>
<div class="a nw" style="left:1093px;top:803px;font-size:13px;line-height:16px;color:#808695">2025 贵州零翔科技有限公司</div>
</body></html>
